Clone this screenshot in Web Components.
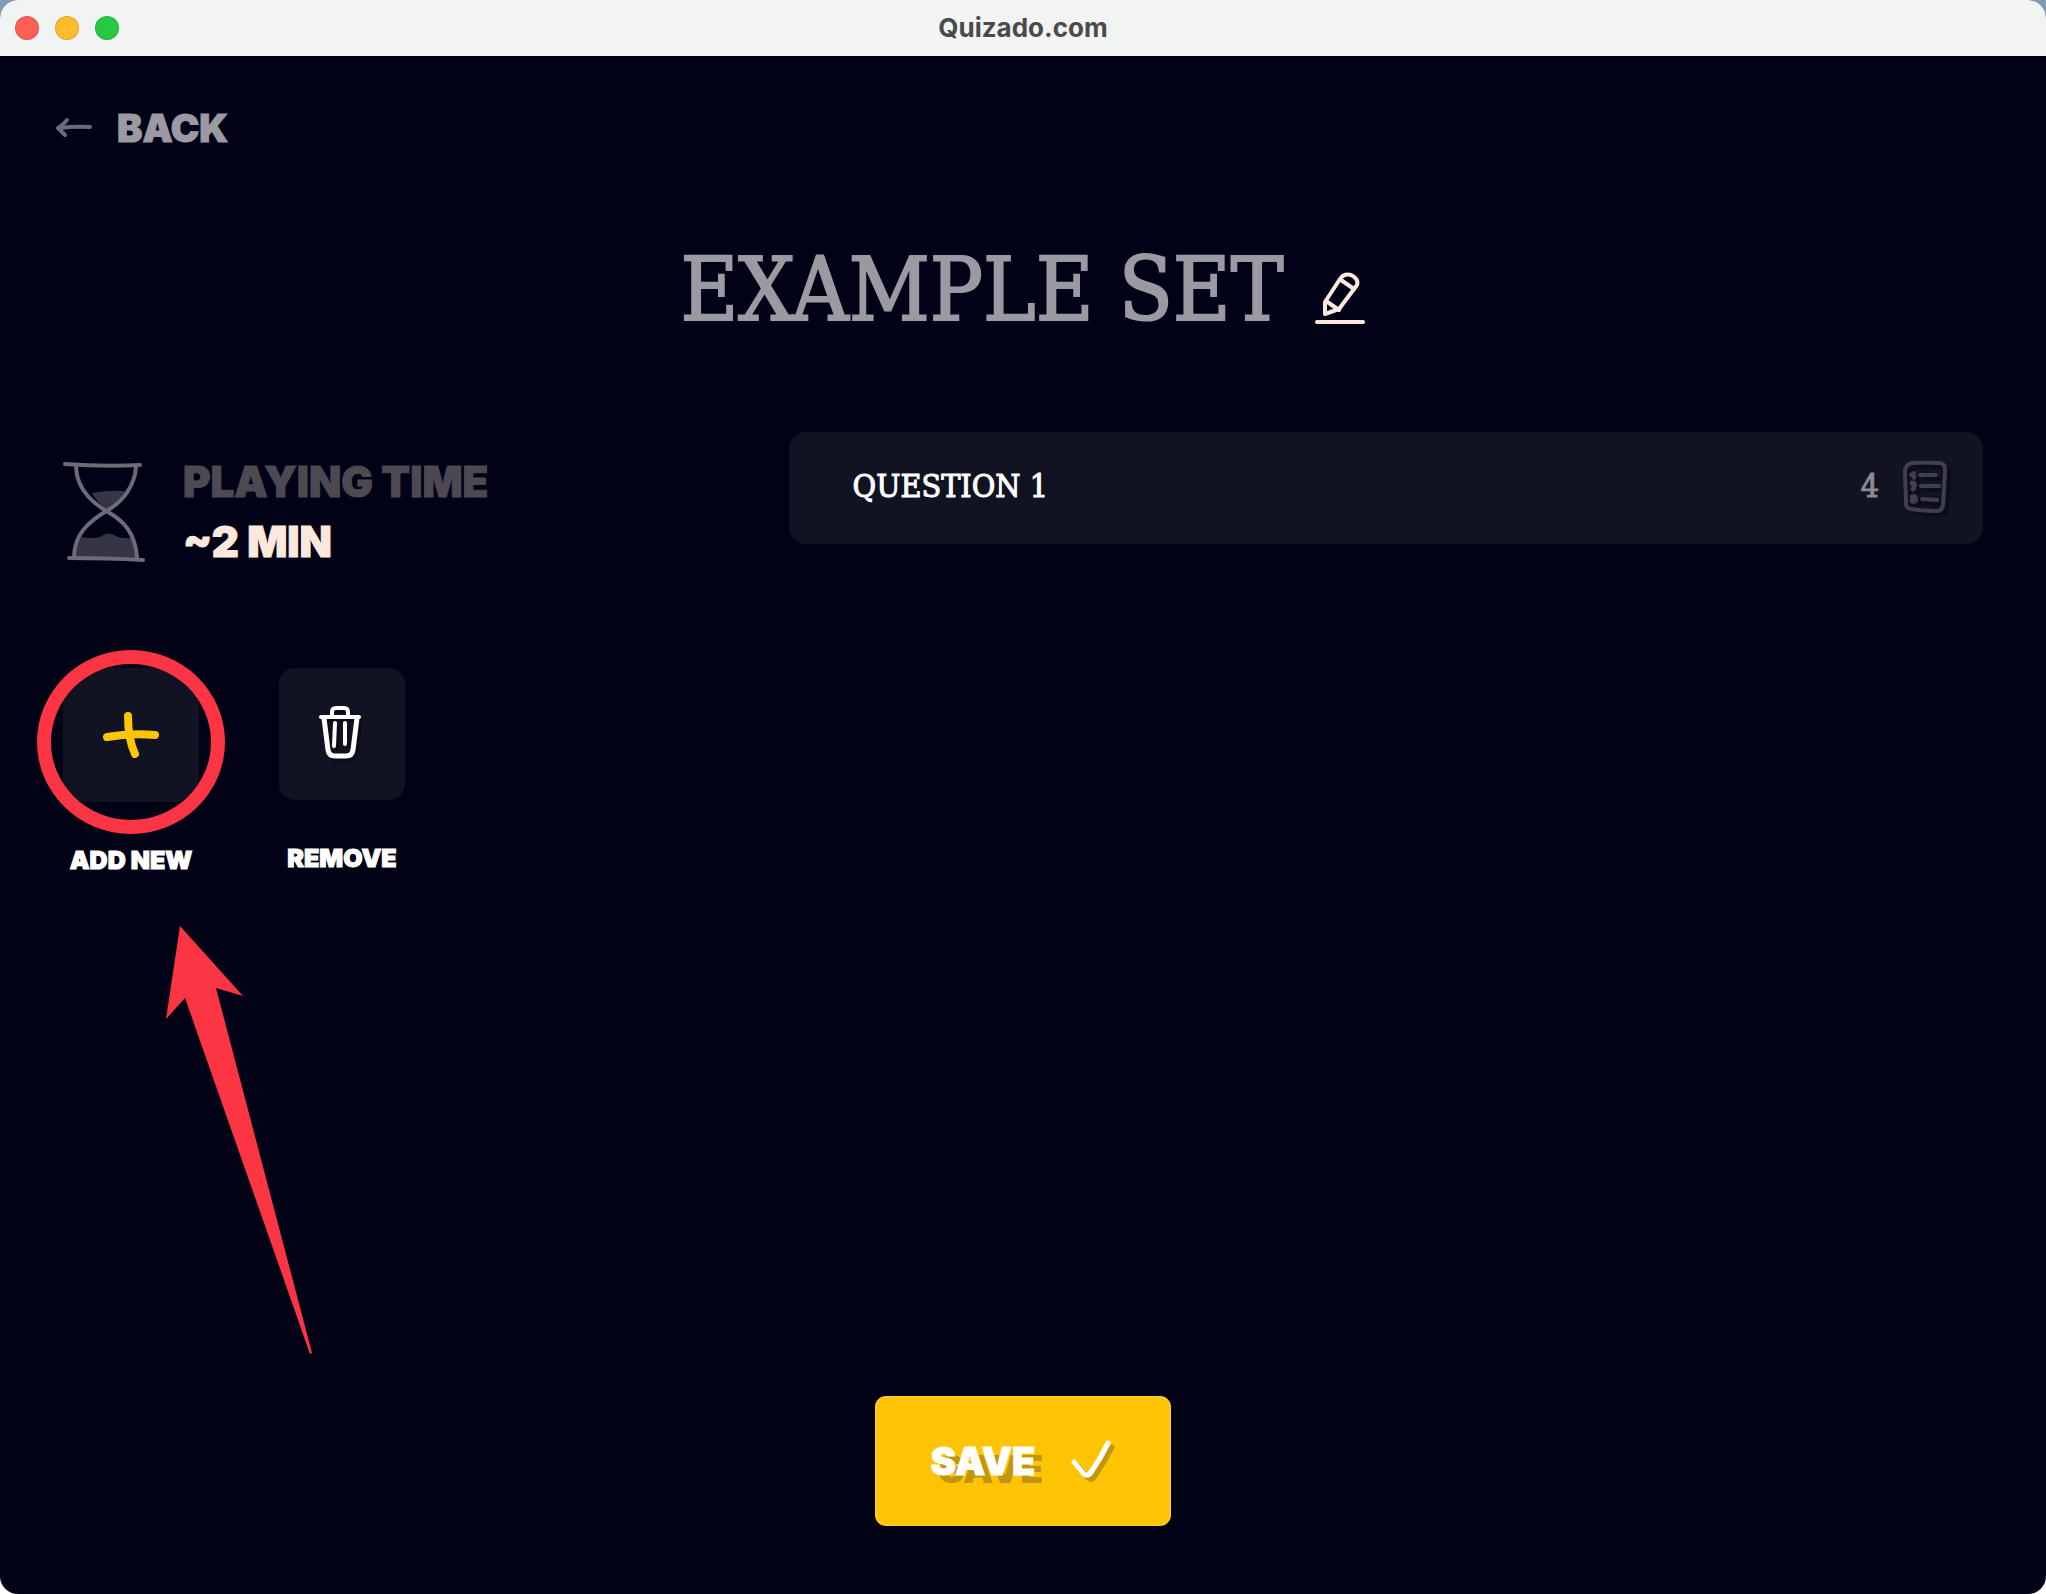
<!DOCTYPE html>
<html lang="en">
<head>
    <meta charset="UTF-8">
    <meta name="viewport" content="width=device-width, initial-scale=1.0">
    <title>Quizado.com</title>
    <style>
        body {
            margin: 0;
            background: linear-gradient(#7f9db5 50%, #ffffff 50%);
            color: #ffffff;
            --display: "Inter", "Liberation Sans", sans-serif;
            --slab: "DejaVu Serif Condensed", "DejaVu Serif", serif;
            --panel: #111222;
            --accent: #ffc505;
            --cream: #fbe9dd;
            --mark: #fb3544;
            font-family: var(--display);
        }
    </style>
</head>

<body>
    <app-window heading="Quizado.com">
        <back-link href="#sets">BACK</back-link>
        <set-title>EXAMPLE SET</set-title>
        <set-editor>
            <playing-time slot="side" label="PLAYING TIME">~2 MIN</playing-time>
            <action-bar slot="side">
                <action-tile icon="plus" class="add" marked>ADD NEW</action-tile>
                <action-tile icon="trash">REMOVE</action-tile>
            </action-bar>
            <question-row count="4">QUESTION 1</question-row>
        </set-editor>
        <save-button>SAVE</save-button>
    </app-window>

    <script>
        const icons = {
            arrow: {
                size: [38, 22],
                body: `<g fill="none" stroke="#6c6b77" stroke-width="4" stroke-linecap="round" stroke-linejoin="round">
                    <path d="M12 3 Q7 9 3 11 Q6 14 10 18"/><path d="M4 11 Q20 9 35 10"/></g>`
            },
            pencil: {
                size: [50, 54],
                body: `<g fill="none" stroke="#fbe9dd" stroke-width="4" stroke-linecap="round" stroke-linejoin="round">
                    <path d="M10 42 L10 30 L25 7 Q29 1 36 3 Q44 7 42 13 L24 37 Z"/>
                    <path d="M26 8 L39 17"/><path d="M11 29 L24 38"/><path d="M2 50 H48"/></g>`
            },
            hourglass: {
                size: [82, 100],
                body: `<path d="M29 31 Q46 28 62 29 Q56 41 45 48 Q35 42 29 31Z" fill="#353544"/>
                    <path d="M18 75 Q28 77 37 75 Q45 69 51 73 Q58 77 69 76 L73 97 L11 97 Q12 84 18 75Z" fill="#353544"/>
                    <g fill="none" stroke="#6c6b77" stroke-width="4" stroke-linecap="round">
                    <path d="M2 2 Q42 5 77 3"/><path d="M6 96 Q45 96 80 98"/>
                    <path d="M13 5 C14 31 35 44 45 50 C61 59 72 71 74 95"/>
                    <path d="M73 5 C72 22 61 39 45 48 C23 61 11 74 11 96"/></g>`
            },
            plus: {
                size: [56, 46],
                body: `<g fill="none" stroke="#ffc505" stroke-width="8" stroke-linecap="round">
                    <path d="M4 25 Q27 21 52 23"/><path d="M25 4 Q25 27 32 42"/></g>`
            },
            trash: {
                size: [46, 56],
                body: `<defs><g id="bin" fill="none" stroke-width="4" stroke-linecap="round" stroke-linejoin="round">
                    <path d="M2 11 H40"/><path d="M13 10 V6 Q13 2 17 2 H25 Q29 2 29 6 V10"/>
                    <path d="M5 12 L9 44 Q10 50 16 50 H27 Q33 50 34 44 L38 12" stroke-width="5"/>
                    <path d="M16 17 L15 40"/><path d="M26 17 V38"/></g></defs>
                    <use href="#bin" x="3" y="3" stroke="#0c0d1a"/><use href="#bin" stroke="#ffffff"/>`
            },
            list: {
                size: [48, 56],
                body: `<defs><g id="sheet" fill="none" stroke-width="4" stroke-linecap="round" stroke-linejoin="round">
                    <path d="M9 2 Q22 1 37 2 Q43 3 42 11 L40 44 Q39 50 33 50 Q20 50 8 48 Q2 47 3 40 L2 11 Q2 3 9 2Z"/>
                    <path d="M17 14 H33"/><path d="M18 25 H36"/><path d="M19 38 L34 39"/>
                    <path d="M11 12 L8 14 H11 V17"/><path d="M9 22 Q13 22 11 26 L10 28" stroke-width="5"/>
                    <path d="M9 36 Q13 35 12 37 Q14 41 9 40" stroke-width="5"/></g></defs>
                    <use href="#sheet" x="4" y="4" stroke="#0c0d1a"/><use href="#sheet" stroke="#403f4d"/>`
            },
            check: {
                size: [44, 42],
                body: `<defs><path id="tick" fill="none" stroke-width="5" stroke-linecap="round" stroke-linejoin="round" d="M3 22 L12 33 Q16 38 20 32 L29 18 L37 3"/></defs>
                    <use href="#tick" x="4" y="4" stroke="#c19512"/><use href="#tick" stroke="#ffffff"/>`
            }
        };

        function icon(name) {
            const [w, h] = icons[name].size;
            return `<svg width="${w}" height="${h}" viewBox="0 0 ${w} ${h}" aria-hidden="true">${icons[name].body}</svg>`;
        }

        class BaseElement extends HTMLElement {
            constructor() {
                super();
                this.attachShadow({ mode: 'open' });
            }

            connectedCallback() {
                this.shadowRoot.innerHTML = `
                    <style>
                        :host { display: block; box-sizing: border-box; }
                        * { box-sizing: border-box; }
                        svg { display: block; flex: none; }
                        button {
                            border: 0;
                            padding: 0;
                            background: none;
                            color: inherit;
                            font: inherit;
                            cursor: pointer;
                        }
                    </style>
                    ${this.render()}
                `;
            }
        }

        class AppWindow extends BaseElement {
            render() {
                return `
                    <style>
                        :host {
                            display: flex;
                            flex-direction: column;
                            min-height: 100vh;
                            border-radius: 18px;
                            overflow: hidden;
                            background: #010216;
                        }
                        header {
                            display: grid;
                            grid-template-columns: 1fr auto 1fr;
                            align-items: center;
                            height: 56px;
                            padding: 0 15px;
                            background: #f2f4f3;
                        }
                        .lights { display: flex; gap: 16px; }
                        .lights i {
                            width: 24px;
                            height: 24px;
                            border-radius: 50%;
                            border: 1px solid rgba(0, 0, 0, 0.12);
                        }
                        .close { background: #ff5f57; }
                        .min { background: #febc2e; }
                        .max { background: #28c840; }
                        .name {
                            color: #4a4a4a;
                            font-size: 26px;
                            font-weight: 700;
                            line-height: 32px;
                        }
                        main {
                            flex: 1;
                            display: flex;
                            flex-direction: column;
                            padding: 52px 63px 68px;
                            border-top: 2px solid #000000;
                        }
                    </style>
                    <header>
                        <div class="lights"><i class="close"></i><i class="min"></i><i class="max"></i></div>
                        <div class="name">${this.getAttribute('heading')}</div>
                    </header>
                    <main><slot></slot></main>
                `;
            }
        }

        class BackLink extends BaseElement {
            render() {
                return `
                    <style>
                        :host { margin-left: -8px; }
                        a {
                            display: inline-flex;
                            align-items: center;
                            gap: 24px;
                            color: #9b9aa3;
                            font-size: 38px;
                            font-weight: 900;
                            line-height: 36px;
                            text-decoration: none;
                            -webkit-text-stroke: 1px;
                        }
                    </style>
                    <a href="${this.getAttribute('href')}">${icon('arrow')}<slot></slot></a>
                `;
            }
        }

        class SetTitle extends BaseElement {
            render() {
                return `
                    <style>
                        :host {
                            display: flex;
                            justify-content: center;
                            align-items: flex-end;
                            gap: 32px;
                            margin: 96px 0 94px;
                        }
                        h1 {
                            margin: 0;
                            color: #9b9aa3;
                            font-family: var(--slab);
                            font-size: 88px;
                            font-weight: 400;
                            line-height: 96px;
                            -webkit-text-stroke: 2px;
                        }
                        button { padding-bottom: 12px; }
                    </style>
                    <h1><slot></slot></h1>
                    <button aria-label="Rename">${icon('pencil')}</button>
                `;
            }
        }

        class SetEditor extends BaseElement {
            render() {
                return `
                    <style>
                        :host {
                            display: grid;
                            grid-template-columns: 36fr 65fr;
                            gap: 64px;
                            align-items: start;
                        }
                        aside { padding-top: 20px; }
                    </style>
                    <aside><slot name="side"></slot></aside>
                    <section><slot></slot></section>
                `;
            }
        }

        class PlayingTime extends BaseElement {
            render() {
                return `
                    <style>
                        :host {
                            display: flex;
                            align-items: center;
                            gap: 38px;
                            font-size: 42px;
                            font-weight: 900;
                            line-height: 60px;
                            -webkit-text-stroke: 1px;
                        }
                        .label { color: #4d4953; }
                        .value { color: var(--cream); }
                    </style>
                    ${icon('hourglass')}
                    <div>
                        <div class="label">${this.getAttribute('label')}</div>
                        <div class="value"><slot></slot></div>
                    </div>
                `;
            }
        }

        class ActionBar extends BaseElement {
            render() {
                return `
                    <style>
                        :host {
                            display: flex;
                            gap: 80px;
                            margin-top: 96px;
                        }
                    </style>
                    <slot></slot>
                `;
            }
        }

        class ActionTile extends BaseElement {
            render() {
                // ring and arrow point the user at this tile
                const marks = this.hasAttribute('marked') ? `
                    <div class="ring"></div>
                    <svg class="pointer" width="148" height="430" viewBox="0 0 148 430" aria-hidden="true">
                        <path d="M14 0 L77 70 L50 62 L146 427 L144 428 L19 72 L0 93Z" fill="#fb3544"/>
                    </svg>` : '';
                return `
                    <style>
                        :host { position: relative; }
                        button {
                            display: flex;
                            flex-direction: column;
                            align-items: center;
                            gap: 42px;
                            font-size: 25px;
                            font-weight: 900;
                            line-height: 32px;
                            white-space: nowrap;
                            -webkit-text-stroke: 1px;
                        }
                        .tile {
                            display: flex;
                            align-items: center;
                            justify-content: center;
                            width: 126px;
                            height: 132px;
                            border-radius: 16px;
                            background: var(--panel);
                        }
                        :host(.add) .tile { width: 136px; height: 134px; }
                        .ring {
                            position: absolute;
                            top: -18px;
                            left: -26px;
                            width: 188px;
                            height: 184px;
                            border: 14px solid var(--mark);
                            border-radius: 50%;
                            pointer-events: none;
                        }
                        .pointer {
                            position: absolute;
                            top: 258px;
                            left: 103px;
                            pointer-events: none;
                        }
                    </style>
                    <button>
                        <span class="tile">${icon(this.getAttribute('icon'))}</span>
                        <span><slot></slot></span>
                    </button>
                    ${marks}
                `;
            }
        }

        class QuestionRow extends BaseElement {
            render() {
                return `
                    <style>
                        :host {
                            display: flex;
                            align-items: center;
                            min-height: 112px;
                            padding: 0 32px 4px 64px;
                            border-radius: 16px;
                            background: var(--panel);
                            font-family: var(--slab);
                            font-size: 32px;
                            line-height: 40px;
                            -webkit-text-stroke: 1px;
                        }
                        .text { flex: 1; }
                        .count {
                            display: flex;
                            align-items: center;
                            gap: 24px;
                            color: #8b8b94;
                        }
                        .count svg { margin-top: 6px; }
                    </style>
                    <div class="text"><slot></slot></div>
                    <div class="count">${this.getAttribute('count')}${icon('list')}</div>
                `;
            }
        }

        class SaveButton extends BaseElement {
            render() {
                return `
                    <style>
                        :host { margin: auto auto 0; }
                        button {
                            display: flex;
                            align-items: center;
                            justify-content: center;
                            gap: 36px;
                            min-width: 296px;
                            height: 130px;
                            border: 2px solid #ffcb22;
                            border-radius: 11px;
                            background: var(--accent);
                            font-size: 38px;
                            font-weight: 900;
                            line-height: 40px;
                            text-shadow: 8px 8px 0 #c19512;
                            -webkit-text-stroke: 1px;
                        }
                    </style>
                    <button><slot></slot>${icon('check')}</button>
                `;
            }
        }

        customElements.define('app-window', AppWindow);
        customElements.define('back-link', BackLink);
        customElements.define('set-title', SetTitle);
        customElements.define('set-editor', SetEditor);
        customElements.define('playing-time', PlayingTime);
        customElements.define('action-bar', ActionBar);
        customElements.define('action-tile', ActionTile);
        customElements.define('question-row', QuestionRow);
        customElements.define('save-button', SaveButton);
    </script>
</body>
</html>
